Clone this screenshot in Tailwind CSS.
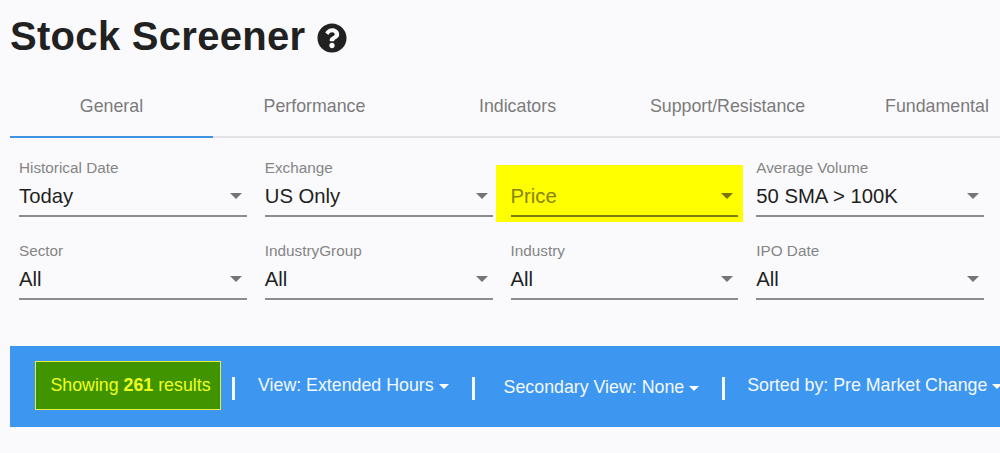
<!DOCTYPE html>
<html lang="en">
<head>
<meta charset="UTF-8">
<title>Stock Screener</title>
<script src="https://cdn.jsdelivr.net/npm/@tailwindcss/browser@4"></script>
</head>
<body class="bg-[#fafafc] h-[453px] w-[1000px] overflow-hidden font-['Liberation_Sans',Arial,sans-serif]">
  <div class="pl-[10px]">
    <div class="flex items-center h-[72px] gap-[12px]">
      <h1 class="text-[40px] leading-none font-bold text-[#212121] tracking-[0.3px]">Stock Screener</h1>
      <svg class="w-[30px] h-[30px] mt-[4px]" viewBox="0 0 512 512" fill="#212121"><path d="M504 256c0 137-111 248-248 248S8 393 8 256 119 8 256 8s248 111 248 248zM262.700 90c-54.500 0-89.300 23-116.500 63.800-3.500 5.300-2.400 12.400 2.700 16.300l34.700 26.300c5.200 3.900 12.600 3 16.700-2.100 17.900-22.700 30.100-35.800 57.300-35.800 20.400 0 45.700 13.100 45.700 32.900 0 15-12.400 22.700-32.500 34-23.500 13.200-54.600 29.600-54.600 70.700V300c0 6.600 5.400 12 12 12h56c6.600 0 12-5.400 12-12v-1.300c0-28.500 83.200-29.700 83.200-106.700 0-58-60.200-102-116.500-102zM256 338c-25.400 0-46 20.600-46 46s20.600 46 46 46 46-20.600 46-46-20.600-46-46-46z"/></svg>
    </div>

    <div class="flex w-[1028px] h-[66px] border-b-2 border-[#e3e3e5] text-[17.800px] text-[#7b7b7b]">
      <div class="w-[203px] h-[66px] border-b-2 border-[#3f93e0] flex items-center justify-center pt-[4px]">General</div>
      <div class="w-[203px] flex items-center justify-center pt-[4px]">Performance</div>
      <div class="w-[203px] flex items-center justify-center pt-[4px]">Indicators</div>
      <div class="w-[217px] flex items-center justify-center pt-[4px]">Support/Resistance</div>
      <div class="w-[202px] flex items-center justify-center pt-[4px]">Fundamental</div>
    </div>

    <div class="grid grid-cols-4 gap-x-[18px] gap-y-[25px] w-[965px] ml-[9px] mt-[21px]">
      <div class="h-[58px] flex flex-col">
        <span class="text-[15.300px] leading-[18px] text-[#858585]">Historical Date</span>
        <div class="flex-1 flex items-center justify-between pr-[5px] border-b-2 border-[#8c8c8c]">
          <span class="text-[20.300px] text-[#1f1f1f]">Today</span>
          <span class="w-0 h-0 border-x-[6px] border-x-transparent border-t-[6px] border-t-[#757575]"></span>
        </div>
      </div>
      <div class="h-[58px] flex flex-col">
        <span class="text-[15.300px] leading-[18px] text-[#858585]">Exchange</span>
        <div class="flex-1 flex items-center justify-between pr-[5px] border-b-2 border-[#8c8c8c]">
          <span class="text-[20.300px] text-[#1f1f1f]">US Only</span>
          <span class="w-0 h-0 border-x-[6px] border-x-transparent border-t-[6px] border-t-[#757575]"></span>
        </div>
      </div>
      <div class="relative h-[58px] flex flex-col">
        <div class="absolute left-[-15px] right-[-5px] top-[6px] bottom-[-5px] bg-[#ffff00]"></div>
        <span class="relative text-[15.300px] leading-[18px]">&nbsp;</span>
        <div class="relative flex-1 flex items-center justify-between pr-[5px] border-b-2 border-[#7c7c10]">
          <span class="text-[20.300px] text-[#85850a]">Price</span>
          <span class="w-0 h-0 border-x-[6px] border-x-transparent border-t-[6px] border-t-[#77770c]"></span>
        </div>
      </div>
      <div class="h-[58px] flex flex-col">
        <span class="text-[15.300px] leading-[18px] text-[#858585]">Average Volume</span>
        <div class="flex-1 flex items-center justify-between pr-[5px] border-b-2 border-[#8c8c8c]">
          <span class="text-[20.300px] text-[#1f1f1f]">50 SMA &gt; 100K</span>
          <span class="w-0 h-0 border-x-[6px] border-x-transparent border-t-[6px] border-t-[#757575]"></span>
        </div>
      </div>
      <div class="h-[58px] flex flex-col">
        <span class="text-[15.300px] leading-[18px] text-[#858585]">Sector</span>
        <div class="flex-1 flex items-center justify-between pr-[5px] border-b-2 border-[#8c8c8c]">
          <span class="text-[20.300px] text-[#1f1f1f]">All</span>
          <span class="w-0 h-0 border-x-[6px] border-x-transparent border-t-[6px] border-t-[#757575]"></span>
        </div>
      </div>
      <div class="h-[58px] flex flex-col">
        <span class="text-[15.300px] leading-[18px] text-[#858585]">IndustryGroup</span>
        <div class="flex-1 flex items-center justify-between pr-[5px] border-b-2 border-[#8c8c8c]">
          <span class="text-[20.300px] text-[#1f1f1f]">All</span>
          <span class="w-0 h-0 border-x-[6px] border-x-transparent border-t-[6px] border-t-[#757575]"></span>
        </div>
      </div>
      <div class="h-[58px] flex flex-col">
        <span class="text-[15.300px] leading-[18px] text-[#858585]">Industry</span>
        <div class="flex-1 flex items-center justify-between pr-[5px] border-b-2 border-[#8c8c8c]">
          <span class="text-[20.300px] text-[#1f1f1f]">All</span>
          <span class="w-0 h-0 border-x-[6px] border-x-transparent border-t-[6px] border-t-[#757575]"></span>
        </div>
      </div>
      <div class="h-[58px] flex flex-col">
        <span class="text-[15.300px] leading-[18px] text-[#858585]">IPO Date</span>
        <div class="flex-1 flex items-center justify-between pr-[5px] border-b-2 border-[#8c8c8c]">
          <span class="text-[20.300px] text-[#1f1f1f]">All</span>
          <span class="w-0 h-0 border-x-[6px] border-x-transparent border-t-[6px] border-t-[#757575]"></span>
        </div>
      </div>
    </div>

    <div class="mt-[46px] h-[81px] bg-[#3d96f0] flex items-center pl-[25px] text-[17.800px] text-[#f4f9ff] whitespace-nowrap overflow-hidden">
      <div class="w-[186px] h-[49px] mb-[2px] pl-[5px] shrink-0 bg-[#3f9400] border border-[#e4f03c] flex items-center justify-center text-[#f0ff1e]">
        <span>Showing <b>261</b> results</span>
      </div>
      <span class="w-[3px] h-[23px] mt-[4px] bg-[#f4f9ff] ml-[11px] shrink-0"></span>
      <span class="ml-[23px] flex items-center mb-[3px]">View: Extended Hours<span class="ml-[5px] mt-[3px] w-0 h-0 border-x-[5px] border-x-transparent border-t-[5px] border-t-white"></span></span>
      <span class="w-[3px] h-[23px] mt-[4px] bg-[#f4f9ff] ml-[23px] shrink-0"></span>
      <span class="ml-[29px] flex items-center mt-[1px]">Secondary View: None<span class="ml-[5px] mt-[3px] w-0 h-0 border-x-[5px] border-x-transparent border-t-[5px] border-t-white"></span></span>
      <span class="w-[3px] h-[23px] mt-[4px] bg-[#f4f9ff] ml-[23px] shrink-0"></span>
      <span class="ml-[22px] flex items-center mb-[3px]">Sorted by: Pre Market Change<span class="ml-[5px] mt-[3px] w-0 h-0 border-x-[5px] border-x-transparent border-t-[5px] border-t-white"></span></span>
    </div>
  </div>
</body>
</html>
